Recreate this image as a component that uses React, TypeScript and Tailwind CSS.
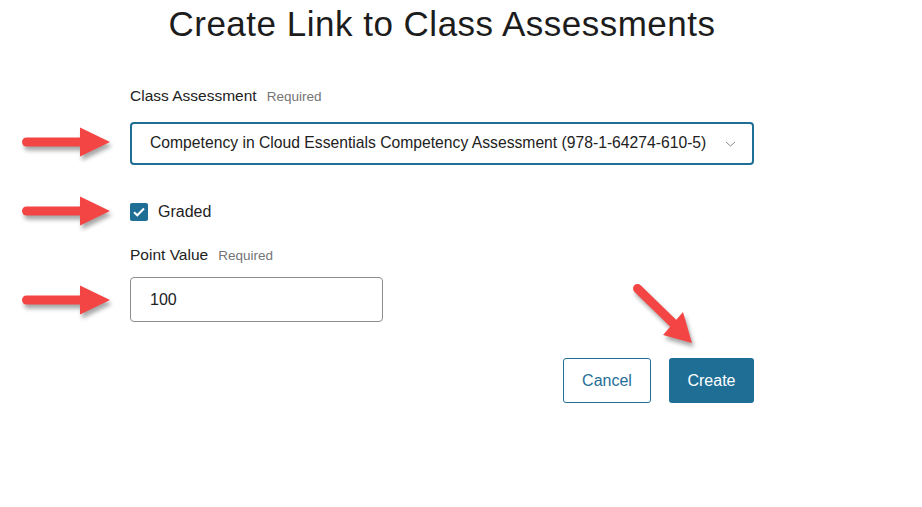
import React from "react";

function HArrow({ top }: { top: number }) {
  return (
    <svg
      className="absolute"
      style={{ left: 10, top, filter: "drop-shadow(2px 4px 2px rgba(0,0,0,0.35))" }}
      width={104}
      height={44}
      viewBox="0 0 104 44"
    >
      <line x1={16.5} y1={20} x2={75} y2={20} stroke="#f44545" strokeWidth={9} strokeLinecap="round" />
      <polygon points="70,5.5 100,20 70,34.5" fill="#f44545" />
    </svg>
  );
}

export default function App() {
  return (
    <div
      className="relative w-[922px] h-[507px] bg-white overflow-hidden"
      style={{ fontFamily: '"Liberation Sans", Arial, sans-serif' }}
    >
      <div className="ml-[130px] w-[624px] flex flex-col">
        <h1 className="pt-[4px] text-[35px] leading-[40px] tracking-[0.5px] text-center text-[#1c1c1c] font-normal whitespace-nowrap">
          Create Link to Class Assessments
        </h1>

        <div className="mt-[42px] flex items-baseline gap-[10px] leading-[20px]">
          <span className="text-[15.5px] text-[#222]">Class Assessment</span>
          <span className="text-[13.5px] text-[#757575]">Required</span>
        </div>

        <div className="mt-[15px] h-[43px] border-2 border-[#1f6e96] rounded-[4px] flex items-center justify-between pl-[18px] pr-[16px] pb-[2px]">
          <span className="text-[15.7px] text-[#222]">
            Competency in Cloud Essentials Competency Assessment (978-1-64274-610-5)
          </span>
          <svg width="11" height="7" viewBox="0 0 11 7" className="mt-[3px]">
            <polyline points="1,1 5.5,5 10,1" fill="none" stroke="#8a8a8a" strokeWidth="1" />
          </svg>
        </div>

        <div className="mt-[37px] flex items-center gap-[10px]">
          <div className="w-[18px] h-[18px] rounded-[2px] bg-[#1f6e96] flex items-center justify-center">
            <svg width="14" height="12" viewBox="0 0 14 12">
              <polyline points="2,6.2 5.3,9.3 12,2.5" fill="none" stroke="white" strokeWidth="2" />
            </svg>
          </div>
          <span className="text-[16px] leading-[20px] text-[#222]">Graded</span>
        </div>

        <div className="mt-[23px] flex items-baseline gap-[10px] leading-[20px]">
          <span className="text-[15.5px] text-[#222]">Point Value</span>
          <span className="text-[13.5px] text-[#757575]">Required</span>
        </div>

        <div className="mt-[11px] w-[253px] h-[45px] border border-[#8c8c8c] rounded-[4px] flex items-center pl-[19px]">
          <span className="text-[16px] text-[#222]">100</span>
        </div>

        <div className="mt-[36px] flex justify-end gap-[18px]">
          <button className="w-[88px] h-[45px] border border-[#1f6e96] rounded-[3px] text-[16px] text-[#1f6e96] bg-white">
            Cancel
          </button>
          <button className="w-[85px] h-[45px] rounded-[3px] text-[16px] text-white bg-[#1f6e96]">
            Create
          </button>
        </div>
      </div>

      <HArrow top={122} />
      <HArrow top={191} />
      <HArrow top={280} />

      <svg
        className="absolute"
        style={{ left: 620, top: 275, filter: "drop-shadow(2px 4px 2px rgba(0,0,0,0.35))" }}
        width={90}
        height={80}
        viewBox="0 0 90 80"
      >
        <line x1={17.5} y1={13.5} x2={56} y2={51} stroke="#f44545" strokeWidth={9} strokeLinecap="round" />
        <polygon points="43,60 63,37 72,68" fill="#f44545" />
      </svg>
    </div>
  );
}
